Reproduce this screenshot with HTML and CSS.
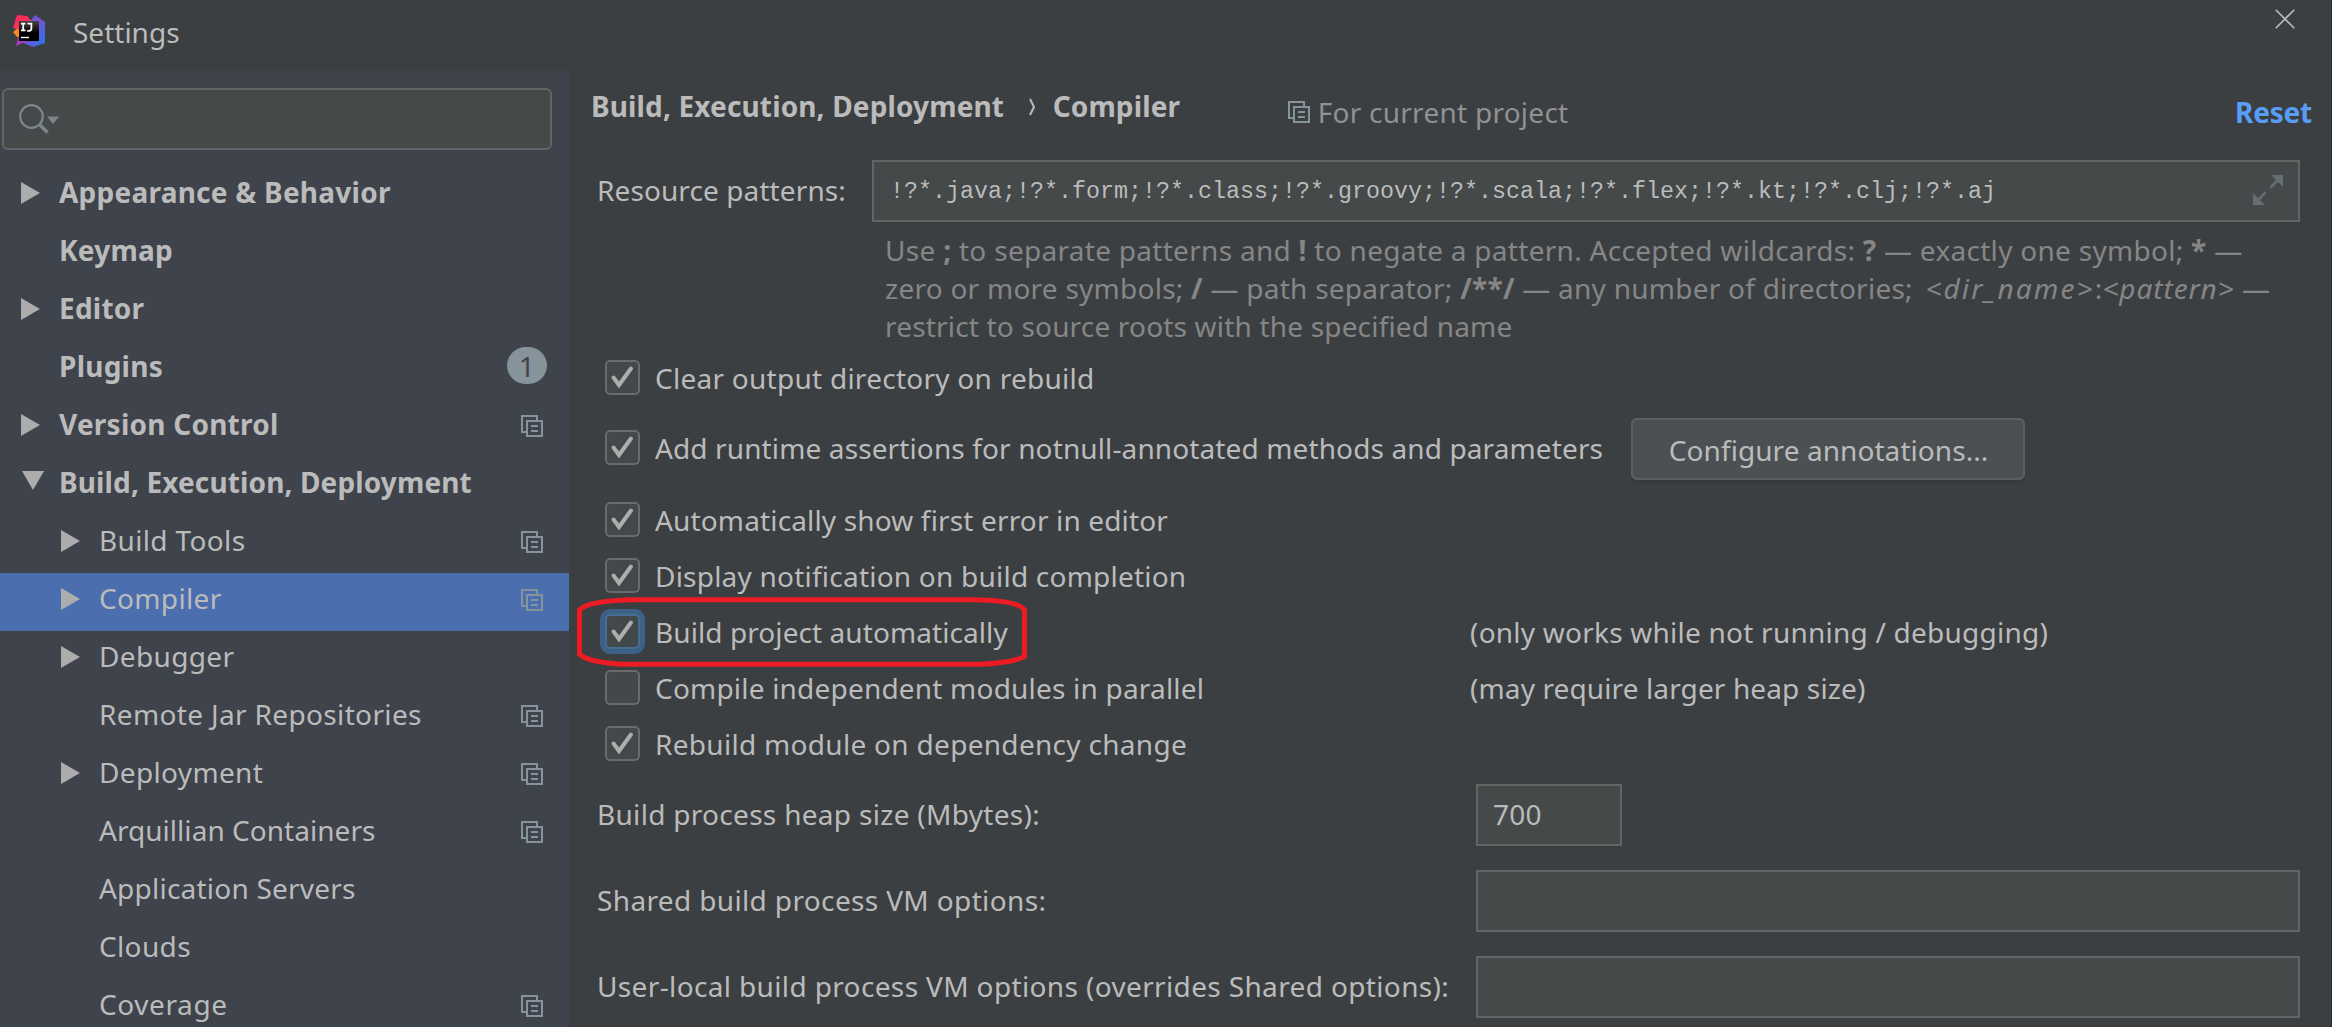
FILE: index.html
```html
<!DOCTYPE html>
<html lang="en">
<head>
<meta charset="utf-8">
<title>Settings</title>
<link rel="stylesheet" href="styles.css">
</head>
<body>
<svg class="defs" width="0" height="0" aria-hidden="true">
  <symbol id="right" viewBox="0 0 19 22"><path d="M0 0L19 11L0 22z" fill="#adadad"/></symbol>
  <symbol id="down" viewBox="0 0 22 19"><path d="M0 0H22L11 19z" fill="#adadad"/></symbol>
  <symbol id="project" viewBox="0 0 22 22"><g fill="none" stroke="#87939a" stroke-width="2"><path d="M6 17H1V1H16V5"/><rect x="6" y="6" width="15" height="15"/><path d="M10 11H17M10 16H17"/></g></symbol>
  <symbol id="check" viewBox="0 0 35 35"><path d="M8.5 17.5L14 25L26 8.5" fill="none" stroke="#adadad" stroke-width="4" stroke-linecap="round"/></symbol>
</svg>
<div class="window">
  <header class="titlebar">
    <svg class="logo" viewBox="0 0 32 32">
      <defs>
        <linearGradient id="gb" x1="0" y1="0" x2="1" y2="1"><stop offset="0" stop-color="#3a70f0"/><stop offset=".45" stop-color="#7a4fd0"/><stop offset="1" stop-color="#1d7cf0"/></linearGradient>
        <linearGradient id="gk" x1="0" y1="0" x2="0" y2="1"><stop offset="0" stop-color="#444"/><stop offset=".6" stop-color="#000"/></linearGradient>
      </defs>
      <path d="M22 0L32 7V28L20 32L8 27L16 8z" fill="url(#gb)"/>
      <path d="M4 0L14 1L20 8L8 16L0 13z" fill="#fb2d5c"/>
      <path d="M0 17L5 13L8 22L4 22z" fill="#fb8a1e"/>
      <path d="M6 20L3 31L14 26z" fill="#a63bc0"/>
      <rect x="6" y="6" width="20" height="20" fill="url(#gk)"/>
      <path d="M8 8.6H12.5M10.2 8.6V15.4M8 15.4H12.5M14.5 8.6H18.4V13.6Q18.4 15.8 16.2 15.8H14.2" fill="none" stroke="#fff" stroke-width="1.8"/>
      <path d="M8 22.5H16" stroke="#fff" stroke-width="1.4"/>
    </svg>
    <span class="title">Settings</span>
    <svg class="close" viewBox="0 0 20 20"><path d="M.7 .7L19.3 19.3M19.3 .7L.7 19.3" stroke="#b8babb" stroke-width="1.6"/></svg>
  </header>
  <div class="body">
    <nav class="sidebar">
      <div class="search">
        <svg viewBox="0 0 40 30" width="40" height="30"><g fill="none" stroke="#7b868c"><circle cx="12.5" cy="12.5" r="11.3" stroke-width="2.2"/><path d="M20.5 20.5L28.5 28.5" stroke-width="3.6"/></g><path d="M28 12.5H40L34 20z" fill="#7b868c"/></svg>
      </div>
      <ul class="tree">
        <li class="row top"><span class="arrow"><svg class="r"><use href="#right"/></svg></span><span class="label">Appearance &amp; Behavior</span></li>
        <li class="row top"><span class="arrow"></span><span class="label">Keymap</span></li>
        <li class="row top"><span class="arrow"><svg class="r"><use href="#right"/></svg></span><span class="label">Editor</span></li>
        <li class="row top"><span class="arrow"></span><span class="label">Plugins</span><span class="badge">1</span></li>
        <li class="row top"><span class="arrow"><svg class="r"><use href="#right"/></svg></span><span class="label">Version Control</span><svg class="proj"><use href="#project"/></svg></li>
        <li class="row top"><span class="arrow"><svg class="d"><use href="#down"/></svg></span><span class="label tight">Build, Execution, Deployment</span></li>
        <li class="row"><span class="arrow"><svg class="r"><use href="#right"/></svg></span><span class="label">Build Tools</span><svg class="proj"><use href="#project"/></svg></li>
        <li class="row selected"><span class="arrow"><svg class="r"><use href="#right"/></svg></span><span class="label">Compiler</span><svg class="proj"><use href="#project"/></svg></li>
        <li class="row"><span class="arrow"><svg class="r"><use href="#right"/></svg></span><span class="label">Debugger</span></li>
        <li class="row"><span class="arrow"></span><span class="label">Remote Jar Repositories</span><svg class="proj"><use href="#project"/></svg></li>
        <li class="row"><span class="arrow"><svg class="r"><use href="#right"/></svg></span><span class="label">Deployment</span><svg class="proj"><use href="#project"/></svg></li>
        <li class="row"><span class="arrow"></span><span class="label snug">Arquillian Containers</span><svg class="proj"><use href="#project"/></svg></li>
        <li class="row"><span class="arrow"></span><span class="label mid">Application Servers</span></li>
        <li class="row"><span class="arrow"></span><span class="label">Clouds</span></li>
        <li class="row"><span class="arrow"></span><span class="label loose">Coverage</span><svg class="proj"><use href="#project"/></svg></li>
      </ul>
    </nav>
    <main class="content">
      <div class="head">
        <div class="crumbs"><span>Build, Execution, Deployment</span><svg class="sep" viewBox="0 0 6 18"><path d="M1 1L5 9L1 17" fill="none" stroke="#bbb" stroke-width="2"/></svg><span>Compiler</span></div>
        <div class="scope"><svg class="proj"><use href="#project"/></svg><span>For current project</span></div>
        <a class="reset">Reset</a>
      </div>
      <div class="patterns">
        <label class="lbl">Resource patterns:</label>
        <div class="field code"><span>!?*.java;!?*.form;!?*.class;!?*.groovy;!?*.scala;!?*.flex;!?*.kt;!?*.clj;!?*.aj</span>
          <svg class="expand" viewBox="0 0 30 30"><path d="M18 0H30V12zM0 18L12 30H0z" fill="#646e73"/><path d="M17.5 12.5L26 4M4 26L12.5 17.5" stroke="#646e73" stroke-width="2.6"/></svg>
        </div>
      </div>
      <div class="hint">
        <p class="h1">Use <b>;</b> to separate patterns and <b>!</b> to negate a pattern. Accepted wildcards: <b>?</b> — exactly one symbol; <b>*</b> —</p>
        <p class="h2">zero or more symbols; <b>/</b> — path separator; <b>/**/</b> — any number of directories; <i class="dir">&lt;dir_name&gt;</i>:<i class="pat">&lt;pattern&gt;</i> —</p>
        <p class="h3">restrict to source roots with the specified name</p>
      </div>
      <div class="checks">
        <div class="opt first"><span class="box"><svg><use href="#check"/></svg></span><span class="text s29">Clear output directory on rebuild</span></div>
        <div class="opt second"><span class="box"><svg><use href="#check"/></svg></span><span class="text s10">Add runtime assertions for notnull-annotated methods and parameters</span><span class="button">Configure annotations...</span></div>
        <div class="opt"><span class="box"><svg><use href="#check"/></svg></span><span class="text s13">Automatically show first error in editor</span></div>
        <div class="opt"><span class="box"><svg><use href="#check"/></svg></span><span class="text s25">Display notification on build completion</span></div>
        <div class="opt marked"><span class="box focus"><svg><use href="#check"/></svg></span><span class="text s06">Build project automatically</span><span class="note s23">(only works while not running / debugging)</span>
          <svg class="ring" viewBox="0 0 450 70"><path d="M54 2.7H395Q441 3 447.5 13V59Q440 65 405 67.3H46Q10 65 2.5 57V13Q10 4 54 2.7z" fill="none" stroke="#ed1c24" stroke-width="5"/></svg>
        </div>
        <div class="opt"><span class="box"></span><span class="text s22">Compile independent modules in parallel</span><span class="note s12">(may require larger heap size)</span></div>
        <div class="opt"><span class="box"><svg><use href="#check"/></svg></span><span class="text s33">Rebuild module on dependency change</span></div>
      </div>
      <div class="form">
        <label class="lbl s33">Build process heap size (Mbytes):</label><div class="field small">700</div>
        <label class="lbl s37">Shared build process VM options:</label><div class="field"></div>
        <label class="lbl s37">User-local build process VM options (overrides Shared options):</label><div class="field"></div>
      </div>
    </main>
  </div>
</div>
</body>
</html>
```
FILE: styles.css
```css
* { box-sizing: border-box; }
body { margin: 0; width: 2342px; height: 1027px; overflow: hidden; background: #fff; }
.defs { position: absolute; }
.window {
  width: 2332px; height: 1027px; overflow: hidden;
  display: flex; flex-direction: column;
  background: #3c3f41; border-right: 1px solid #2b2b2b;
  color: #bbb; font: 28px/60px "Noto Sans", "Open Sans", sans-serif;
  white-space: nowrap;
}
svg { display: block; flex: none; }

.titlebar { height: 71px; flex: none; display: flex; align-items: flex-start; }
.logo { width: 32px; height: 32px; margin: 15px 0 0 13px; }
.title { margin-left: 28px; line-height: 64px; }
.close { width: 20px; height: 20px; margin: 9px 36px 0 auto; }

.body { flex: 1; display: flex; min-height: 0; }

.sidebar { width: 569px; flex: none; background: #3f434b; padding-top: 17px; overflow: hidden; }
.search {
  width: 550px; height: 62px; margin-left: 2px; padding: 14px 0 0 15px;
  border: 2px solid #646464; border-radius: 6px; background: #45494a;
}
.tree { list-style: none; margin: 17px 0 0; padding: 0; }
.row { height: 58px; display: flex; align-items: flex-start; padding-left: 61px; line-height: 51px; letter-spacing: .35px; }
.row.top { padding-left: 21px; font-weight: bold; letter-spacing: .24px; }
.row.selected { background: #4b6eaf; }
.arrow { width: 38px; flex: none; }
.arrow .r { width: 19px; height: 22px; margin-top: 15px; }
.arrow .d { width: 22px; height: 19px; margin: 14px 0 0 1px; }
.label.tight { letter-spacing: .13px; }
.label.snug { letter-spacing: .04px; }
.label.mid { letter-spacing: .22px; }
.label.loose { letter-spacing: .6px; }
.proj { width: 22px; height: 22px; }
.row .proj { margin: 16px 26px 0 auto; }
.badge {
  width: 40px; height: 37px; margin: 6px 22px 0 auto; border-radius: 19px;
  background: #87939a; color: #3f434b; font-weight: normal;
  text-align: center; line-height: 38px;
}

.content { flex: 1; padding-left: 27px; padding-right: 31px; }
.head { height: 89px; display: flex; align-items: flex-start; margin: 0 -12px 0 -5px; }
.crumbs { display: flex; font-weight: bold; line-height: 70px; letter-spacing: .14px; }
.sep { width: 6px; height: 18px; margin: 27px 18px 0 24.5px; }
.scope { display: flex; margin-left: 107.5px; color: #919191; line-height: 82px; letter-spacing: .26px; }
.scope .proj { margin: 30px 8px 0 0; }
.reset { margin-left: auto; color: #589df6; font-weight: bold; line-height: 82px; letter-spacing: -.2px; }

.lbl { line-height: 60px; padding-left: 1px; }
.field { height: 62px; border: 2px solid #646464; background: #45494a; }
.patterns { display: flex; letter-spacing: .1px; }
.patterns .lbl { width: 276px; }
.code {
  flex: 1; display: flex; justify-content: space-between; padding: 0 15px 0 16px;
  font: 23.33px/61px "Liberation Mono", monospace; letter-spacing: 0;
}
.expand { width: 30px; height: 30px; margin-top: 13px; }
.hint { height: 129.5px; padding: 10px 0 0 289px; color: #868686; line-height: 37.8px; }
.hint p { margin: 0; }
.h1 { letter-spacing: .29px; }
.h2 { letter-spacing: .25px; }
.h3 { letter-spacing: .18px; }
.dir { margin-left: 5px; letter-spacing: 2.1px; }
.pat { letter-spacing: .9px; }

.opt { height: 56px; display: flex; align-items: center; padding-left: 8.5px; }
.opt.first { height: 52px; }
.opt.second { height: 88px; }
.box { width: 35px; height: 35px; flex: none; border: 2px solid #6b6b6b; border-radius: 5px; background: #43494a; }
.box svg { width: 35px; height: 35px; margin: -2px; }
.box.focus { border-color: #466d94; box-shadow: 0 0 0 5px #3d6185; }
.text { margin-left: 15.5px; width: 815px; }
.opt.second .text { width: auto; }
.button {
  width: 394px; height: 62px; margin: 3px 0 0 28px; padding-left: 1px;
  border: 2px solid #5e6060; border-radius: 6px; background: #4c5052;
  box-shadow: 0 4px 0 #37393b; text-align: center; line-height: 60px; letter-spacing: .07px;
}
.marked { position: relative; }
.ring { position: absolute; left: -19px; top: -7px; width: 450px; height: 70px; }

.form { display: grid; grid-template-columns: 880px 1fr; row-gap: 24px; margin-top: 12.5px; }
.field.small { width: 146px; padding-left: 15px; line-height: 56px; letter-spacing: .2px; }

.s06 { letter-spacing: .08px; }
.s10 { letter-spacing: .12px; }
.s12 { letter-spacing: .12px; }
.s13 { letter-spacing: .15px; }
.s22 { letter-spacing: .2px; }
.s23 { letter-spacing: .23px; }
.s25 { letter-spacing: .22px; }
.s29 { letter-spacing: .26px; }
.s33 { letter-spacing: .3px; }
.s37 { letter-spacing: .36px; }
```
